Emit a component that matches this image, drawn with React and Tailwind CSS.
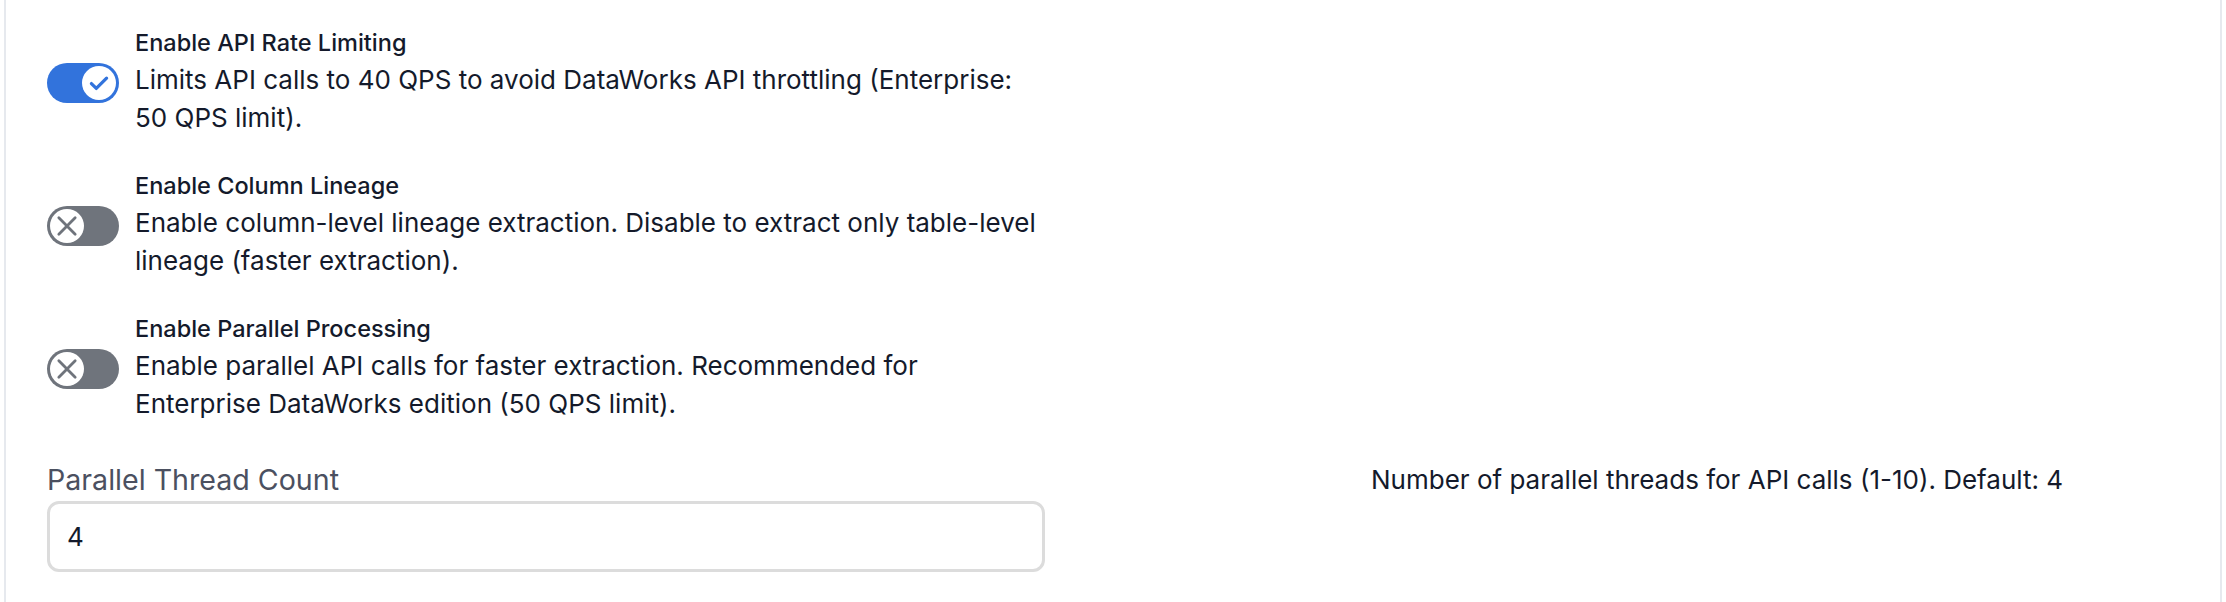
import {useState} from "react";

const CheckThumb = () => (
    <svg viewBox="0 0 24 24" className="w-[26px] h-[26px]" fill="none" stroke="#3273dc" strokeWidth="3"
         strokeLinecap="round" strokeLinejoin="round">
        <path d="M5 12.5l4.5 4.5L19 7.5"/>
    </svg>
);

const XThumb = () => (
    <svg viewBox="0 0 24 24" className="w-[28px] h-[28px]" fill="none" stroke="#6f747c" strokeWidth="2.4"
         strokeLinecap="round">
        <path d="M5 5l14 14M19 5L5 19"/>
    </svg>
);

function Toggle({on, onClick}) {
    return (
        <button
            onClick={onClick}
            className={`shrink-0 w-[72px] h-[40px] rounded-full flex items-center px-[3px] ${on ? "bg-[#3273dc] justify-end" : "bg-[#6f747c] justify-start"}`}>
            <span className="w-[34px] h-[34px] rounded-full bg-white flex items-center justify-center">
                {on ? <CheckThumb/> : <XThumb/>}
            </span>
        </button>
    );
}

function SwitchRow({title, desc, on, onClick}) {
    return (
        <div className="flex items-center gap-[16px]">
            <Toggle on={on} onClick={onClick}/>
            <div className="w-[905px] flex flex-col gap-[4px] text-[#141a2b]">
                <span className="text-[23.5px] leading-[28px] font-medium">{title}</span>
                <p className="text-[26px] leading-[38px]">{desc}</p>
            </div>
        </div>
    );
}

export default function App() {
    const [rateLimit, setRateLimit] = useState(true);
    const [columnLineage, setColumnLineage] = useState(false);
    const [parallel, setParallel] = useState(false);
    const [threads, setThreads] = useState("4");

    return (
        <div className="min-h-screen bg-white" style={{fontFamily: "Inter, 'Noto Sans', sans-serif"}}>
            <div className="mx-[4px] min-h-[602px] border-x-2 border-[#e6e9ee] pl-[41px] pr-[41px] pt-[29px]">
                <div className="w-[998px] flex flex-col gap-[35px]">
                    <SwitchRow
                        title="Enable API Rate Limiting"
                        desc="Limits API calls to 40 QPS to avoid DataWorks API throttling (Enterprise: 50 QPS limit)."
                        on={rateLimit}
                        onClick={() => setRateLimit(!rateLimit)}/>
                    <SwitchRow
                        title="Enable Column Lineage"
                        desc="Enable column-level lineage extraction. Disable to extract only table-level lineage (faster extraction)."
                        on={columnLineage}
                        onClick={() => setColumnLineage(!columnLineage)}/>
                    <SwitchRow
                        title="Enable Parallel Processing"
                        desc="Enable parallel API calls for faster extraction. Recommended for Enterprise DataWorks edition (50 QPS limit)."
                        on={parallel}
                        onClick={() => setParallel(!parallel)}/>
                </div>

                <div className="mt-[39px] grid grid-cols-[998px_1fr]">
                    <div className="flex flex-col gap-[3px]">
                        <label className="text-[28.6px] leading-[36px] text-[#4b5060]">Parallel Thread Count</label>
                        <input
                            value={threads}
                            onChange={e => setThreads(e.target.value)}
                            className="h-[71px] w-full rounded-[12px] border-[3px] border-[#dcdcdc] px-[17px] text-[26px] text-[#141a2b] outline-none"/>
                    </div>
                    <p className="pl-[326px] text-[26px] leading-[36px] text-[#141a2b]">
                        Number of parallel threads for API calls (1-10). Default: 4
                    </p>
                </div>
            </div>
        </div>
    );
}
